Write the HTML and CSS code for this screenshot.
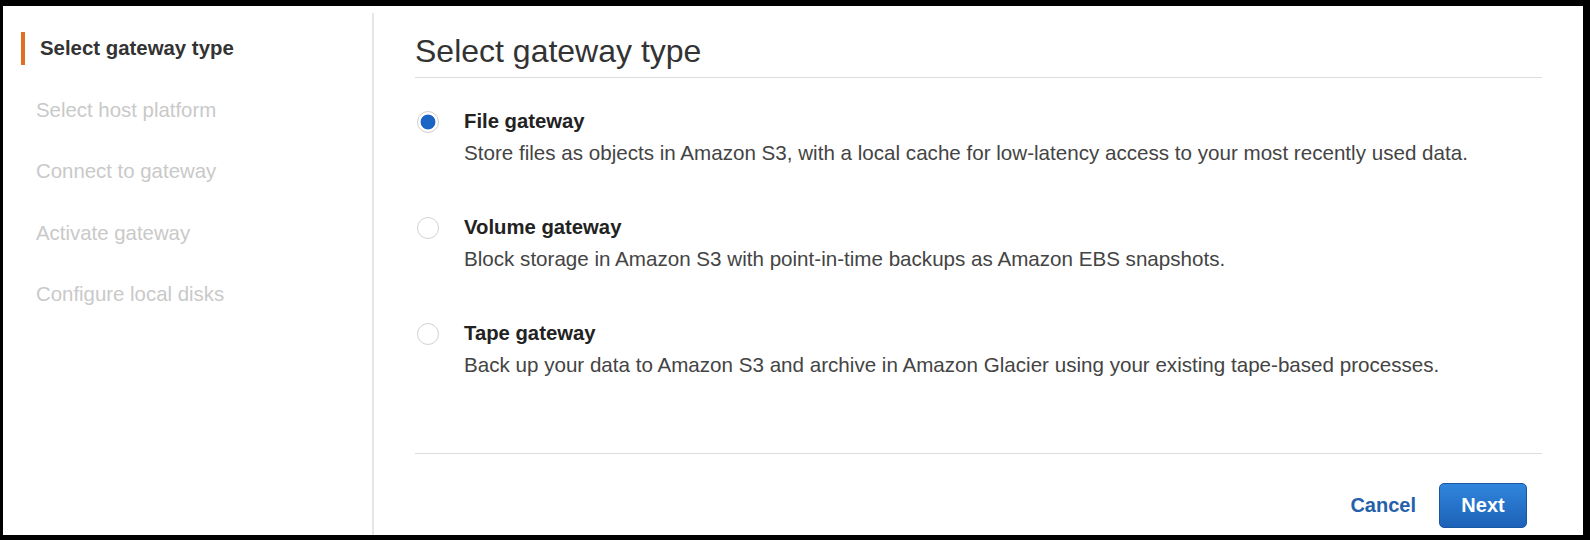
FILE: index.html
```html
<!DOCTYPE html>
<html lang="en">
<head>
  <meta charset="UTF-8" />
  <meta name="viewport" content="width=device-width, initial-scale=1.0"/>
  <title>Select gateway type</title>
  <link rel="stylesheet" href="styles.css">
</head>
<body>

  <div class="frame">
    <aside class="steps">
      <ul>
        <li class="active">Select gateway type</li>
        <li>Select host platform</li>
        <li>Connect to gateway</li>
        <li>Activate gateway</li>
        <li>Configure local disks</li>
      </ul>
    </aside>

    <main class="content">
      <h1>Select gateway type</h1>

      <div class="options">
        <label class="option">
          <input type="radio" name="gateway" checked>
          <span class="option-text">
            <strong>File gateway</strong>
            <span>Store files as objects in Amazon S3, with a local cache for low-latency access to your most recently used data.</span>
          </span>
        </label>
        <label class="option">
          <input type="radio" name="gateway">
          <span class="option-text">
            <strong>Volume gateway</strong>
            <span>Block storage in Amazon S3 with point-in-time backups as Amazon EBS snapshots.</span>
          </span>
        </label>
        <label class="option">
          <input type="radio" name="gateway">
          <span class="option-text">
            <strong>Tape gateway</strong>
            <span>Back up your data to Amazon S3 and archive in Amazon Glacier using your existing tape-based processes.</span>
          </span>
        </label>
      </div>

      <div class="actions">
        <a href="#" class="cancel">Cancel</a>
        <button class="next">Next</button>
      </div>
    </main>
  </div>

</body>
</html>
```

FILE: styles.css
```css
html, body {
  margin: 0;
  padding: 0;
  background: #fff;
}
body {
  font-family: "Liberation Sans", Arial, sans-serif;
  color: #333;
}
.frame {
  display: flex;
  height: 540px;
  box-sizing: border-box;
  border-style: solid;
  border-color: #000;
  border-width: 6px 7px 5px 3px;
  background: #fff;
}
.steps {
  width: 369px;
  margin-top: 7px;
  border-right: 2px solid #e6e6e6;
}
.steps ul {
  list-style: none;
  margin: 0;
  padding: 19px 0 0 18px;
}
.steps li {
  font-size: 20.4px;
  line-height: 33px;
  padding-left: 15px;
  margin-bottom: 28.5px;
  color: #c9c9c9;
}
.steps li.active {
  border-left: 4px solid #e07020;
  color: #333;
  font-weight: bold;
}
.content {
  flex: 1;
  padding: 27px 41px 0 41px;
}
h1 {
  margin: 0;
  font-size: 32px;
  font-weight: normal;
  line-height: 37px;
  color: #333;
  padding-bottom: 7px;
  border-bottom: 1px solid #dcdcdc;
}
.options {
  margin-top: 28px;
}
.option {
  display: flex;
  gap: 25px;
  margin-bottom: 44px;
  cursor: pointer;
}
.option:last-child {
  margin-bottom: 0;
}
.option input {
  appearance: none;
  -webkit-appearance: none;
  width: 22px;
  height: 22px;
  margin: 5px 0 0 2px;
  flex-shrink: 0;
  border: 1px solid #d2d2d2;
  border-radius: 50%;
  background: #fff;
  box-sizing: border-box;
}
.option input:checked {
  background: radial-gradient(circle, #1b66c4 0, #1b66c4 7px, #fff 7.8px);
  border-color: #cfcfcf;
}
.option-text {
  display: flex;
  flex-direction: column;
  font-size: 20.6px;
  line-height: 31px;
  color: #444;
}
.option-text strong {
  color: #222;
  font-size: 20.3px;
}
.actions {
  display: flex;
  justify-content: flex-end;
  align-items: center;
  gap: 23px;
  margin-top: 73px;
  padding: 29px 15px 0 0;
  border-top: 1px solid #dcdcdc;
}
.cancel {
  color: #2560aa;
  font-size: 20px;
  font-weight: bold;
  text-decoration: none;
}
.next {
  height: 45px;
  width: 88px;
  padding: 0;
  font-family: "Liberation Sans", Arial, sans-serif;
  font-size: 20px;
  font-weight: bold;
  color: #fff;
  background: linear-gradient(#3185dc, #1c62b8);
  border: 1px solid #1a57a3;
  border-radius: 5px;
  cursor: pointer;
}
```
